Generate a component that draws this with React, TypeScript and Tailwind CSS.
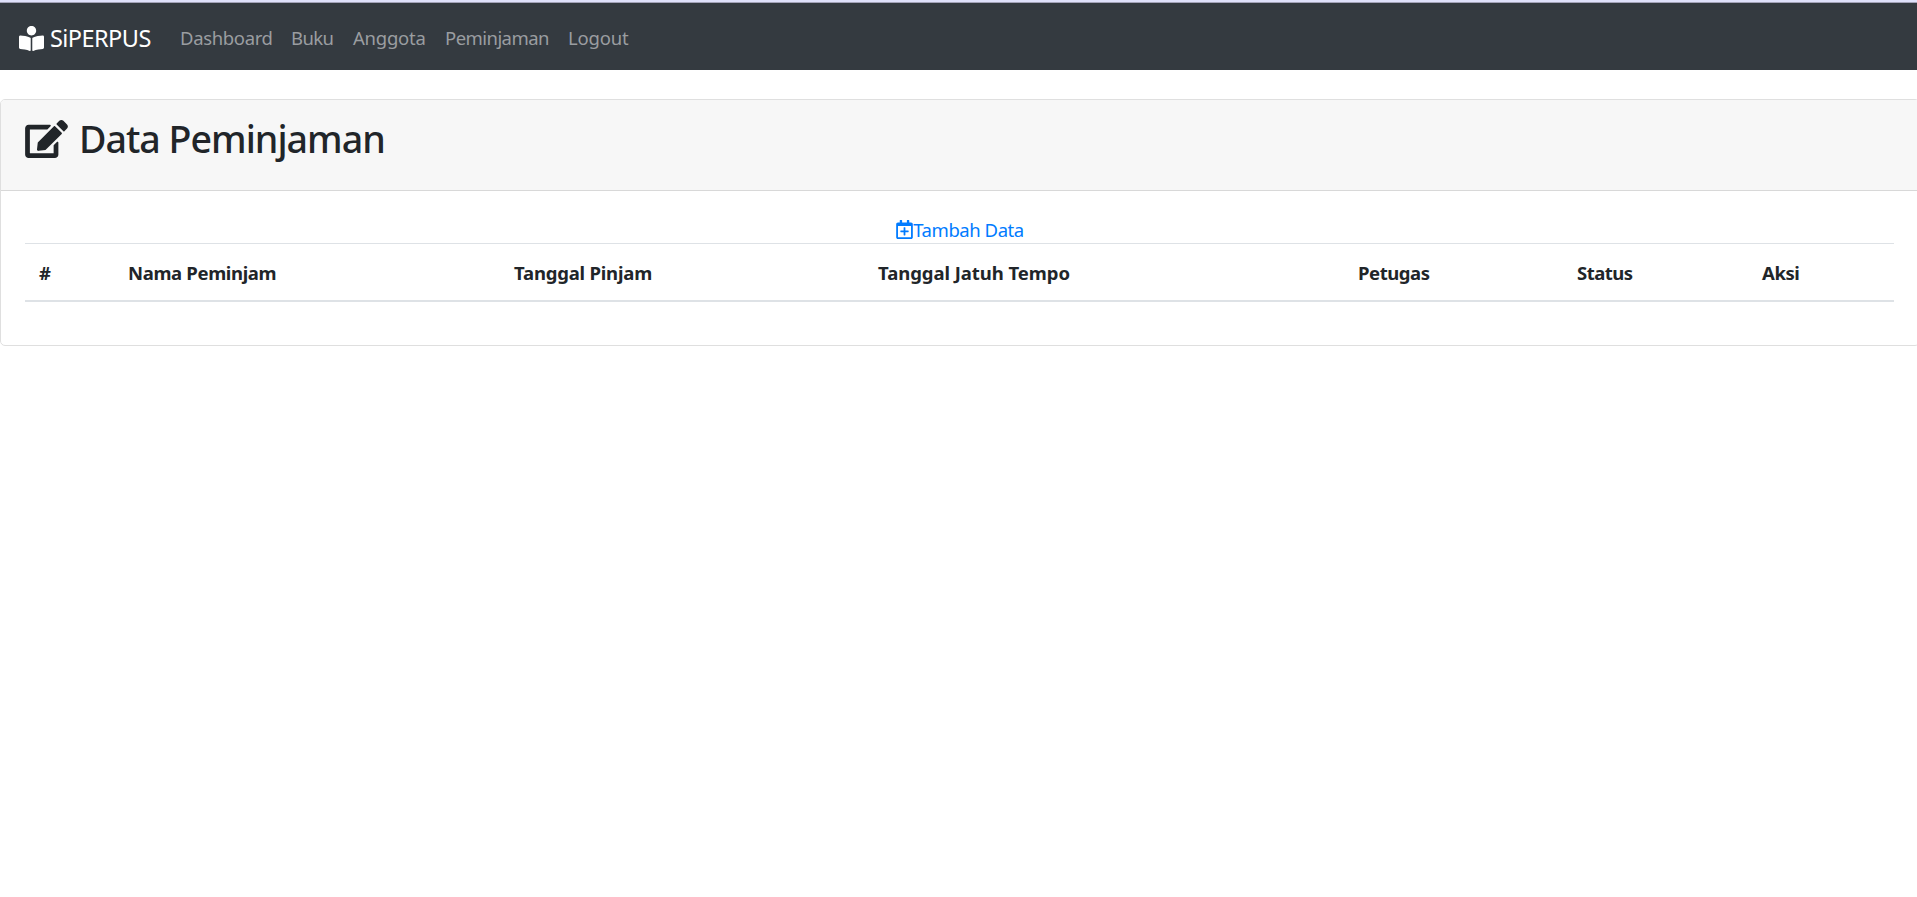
import { FaBookReader, FaEdit, FaRegCalendarPlus } from "react-icons/fa";

const links = [
  { label: "Dashboard", style: "w-[111px] tracking-[-0.35px]" },
  { label: "Buku", style: "w-[62px] tracking-[-0.65px]" },
  { label: "Anggota", style: "w-[92px] tracking-[-0.25px]" },
  { label: "Peminjaman", style: "w-[123px] tracking-[-0.55px]" },
  { label: "Logout", style: "w-[80px] tracking-[-0.2px]" },
];

const columns = [
  { label: "#", style: "w-[89px] tracking-[-0.4px]" },
  { label: "Nama Peminjam", style: "w-[386px] tracking-[-0.35px]" },
  { label: "Tanggal Pinjam", style: "w-[364px] tracking-[-0.2px]" },
  { label: "Tanggal Jatuh Tempo", style: "w-[480px] tracking-[-0.05px]" },
  { label: "Petugas", style: "w-[219px] tracking-[-0.45px]" },
  { label: "Status", style: "w-[185px] tracking-[-0.5px]" },
  { label: "Aksi", style: "w-[146px] tracking-[-0.4px]" },
];

export default function App() {
  return (
    <div className="h-[897px] w-full overflow-hidden bg-white font-['Noto_Sans',sans-serif] text-[18.5px] text-[#212529]">
      <div className="h-[3px] border-b border-[#a3a3b8] bg-[#dfe1fb]" />
      <nav className="flex h-[67px] items-center bg-[#343a40] pt-[3px] pl-[19px]">
        <a href="#" className="flex w-[161px] items-center whitespace-nowrap text-[23.5px] tracking-[-0.55px] text-white">
          <FaBookReader className="mr-[6px] size-[25px] shrink-0" />
          <span className="pt-[2px]">SiPERPUS</span>
        </a>
        {links.map((link) => (
          <a key={link.label} href="#" className={`${link.style} whitespace-nowrap text-[#9a9da0]`}>
            {link.label}
          </a>
        ))}
      </nav>
      <main className="mt-[29px] h-[247px] w-[1920px] rounded-[5px] border border-[#dfdfdf]">
        <header className="flex h-[91px] items-start rounded-t-[4px] border-b border-[#d8d8d8] bg-[#f7f7f7] pt-[16px] pl-6">
          <h1 className="flex h-[46px] items-center whitespace-nowrap text-[37.6px] font-medium tracking-[-1px]">
            <FaEdit className="mr-[11px] h-[38px] w-[43px] shrink-0" />
            Data Peminjaman
          </h1>
        </header>
        <div className="px-6 pt-[25px]">
          <div className="flex h-[27px] justify-center">
            <a href="#" className="flex items-center whitespace-nowrap tracking-[-0.45px] text-[#007bff]">
              <FaRegCalendarPlus className="h-[19px] w-[17px] shrink-0" />
              Tambah Data
            </a>
          </div>
          <table className="w-[1869px] table-fixed border-collapse">
            <thead>
              <tr className="h-[57px] border-t border-b-2 border-[#dee2e6]">
                {columns.map((column) => (
                  <th key={column.label} className={`${column.style} pt-[2px] pl-[14px] text-left font-bold`}>
                    {column.label}
                  </th>
                ))}
              </tr>
            </thead>
            <tbody />
          </table>
        </div>
      </main>
    </div>
  );
}
